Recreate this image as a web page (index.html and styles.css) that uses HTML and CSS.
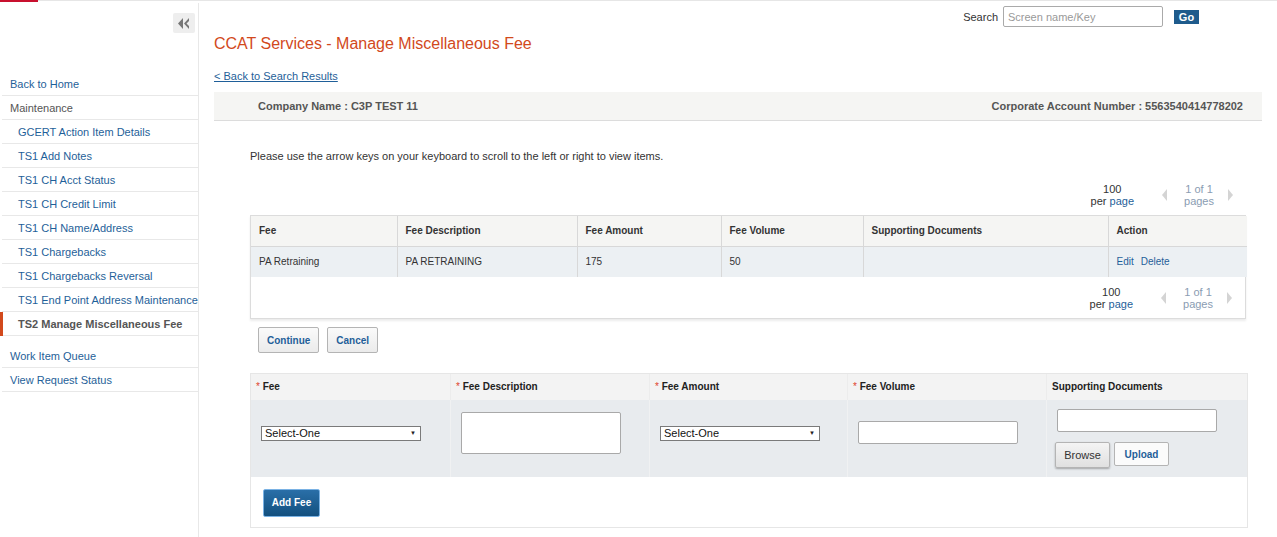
FILE: index.html
```html
<!DOCTYPE html>
<html>
<head>
<meta charset="utf-8">
<link rel="stylesheet" href="styles.css">
</head>
<body>
<div class="topbar"><span class="redmark"></span></div>
<div class="layout">
  <aside class="sidebar">
    <div class="collapse-row">
      <button class="collapse" type="button" aria-label="Collapse">
        <svg width="12" height="11" viewBox="0 0 12 11"><path d="M5 0 L0 5.5 L5 11 L5 0 Z M11 0 L6 5.5 L11 11 L11 8 L8.5 5.5 L11 3 Z" fill="#777"/></svg>
      </button>
    </div>
    <ul class="nav">
      <li class="nav-item"><a class="nav-link" href="#">Back to Home</a></li>
      <li class="nav-item nav-section">Maintenance</li>
      <li class="nav-item nav-sub"><a class="nav-link" href="#">GCERT Action Item Details</a></li>
      <li class="nav-item nav-sub"><a class="nav-link" href="#">TS1 Add Notes</a></li>
      <li class="nav-item nav-sub"><a class="nav-link" href="#">TS1 CH Acct Status</a></li>
      <li class="nav-item nav-sub"><a class="nav-link" href="#">TS1 CH Credit Limit</a></li>
      <li class="nav-item nav-sub"><a class="nav-link" href="#">TS1 CH Name/Address</a></li>
      <li class="nav-item nav-sub"><a class="nav-link" href="#">TS1 Chargebacks</a></li>
      <li class="nav-item nav-sub"><a class="nav-link" href="#">TS1 Chargebacks Reversal</a></li>
      <li class="nav-item nav-sub"><a class="nav-link" href="#">TS1 End Point Address Maintenance</a></li>
      <li class="nav-item nav-sub nav-active">TS2 Manage Miscellaneous Fee</li>
      <li class="nav-item nav-gap"><a class="nav-link" href="#">Work Item Queue</a></li>
      <li class="nav-item"><a class="nav-link" href="#">View Request Status</a></li>
    </ul>
  </aside>

  <main class="main">
    <div class="search-row">
      <label class="search-label">Search</label>
      <input class="search-input" type="text" placeholder="Screen name/Key">
      <button class="go-btn" type="button">Go</button>
    </div>
    <h1 class="page-title">CCAT Services - Manage Miscellaneous Fee</h1>
    <a class="back-link" href="#">&lt; Back to Search Results</a>

    <div class="company-bar">
      <span>Company Name : C3P TEST 11</span>
      <span>Corporate Account Number : 5563540414778202</span>
    </div>

    <div class="content">
      <p class="hint">Please use the arrow keys on your keyboard to scroll to the left or right to view items.</p>

      <div class="pager pager-top">
        <div class="perpage"><span class="num">100</span><span class="pp">per <a href="#">page</a></span></div>
        <span class="arrow arrow-left"></span>
        <div class="pages"><span>1 of 1</span><span>pages</span></div>
        <span class="arrow arrow-right"></span>
      </div>

      <div class="grid-box">
        <table class="grid">
          <colgroup>
            <col style="width:146px"><col style="width:180px"><col style="width:144px"><col style="width:142px"><col style="width:245px"><col style="width:139px">
          </colgroup>
          <thead>
            <tr><th>Fee</th><th>Fee Description</th><th>Fee Amount</th><th>Fee Volume</th><th>Supporting Documents</th><th>Action</th></tr>
          </thead>
          <tbody>
            <tr><td>PA Retraining</td><td>PA RETRAINING</td><td>175</td><td>50</td><td></td><td><a href="#">Edit</a><a class="gap-link" href="#">Delete</a></td></tr>
          </tbody>
        </table>
        <div class="pager pager-bottom">
          <div class="perpage"><span class="num">100</span><span class="pp">per <a href="#">page</a></span></div>
          <span class="arrow arrow-left"></span>
          <div class="pages"><span>1 of 1</span><span>pages</span></div>
          <span class="arrow arrow-right"></span>
        </div>
      </div>

      <div class="actions">
        <button class="btn" type="button">Continue</button>
        <button class="btn" type="button">Cancel</button>
      </div>

      <div class="form-box">
        <div class="form-grid">
          <div class="fh"><span class="req">*</span> Fee</div>
          <div class="fh"><span class="req">*</span> Fee Description</div>
          <div class="fh"><span class="req">*</span> Fee Amount</div>
          <div class="fh"><span class="req">*</span> Fee Volume</div>
          <div class="fh">Supporting Documents</div>

          <div class="fc"><div class="sel"><span>Select-One</span><span class="caret">&#9660;</span></div></div>
          <div class="fc"><textarea class="ta"></textarea></div>
          <div class="fc"><div class="sel"><span>Select-One</span><span class="caret">&#9660;</span></div></div>
          <div class="fc"><input class="txt" type="text"></div>
          <div class="fc fc-docs">
            <input class="txt" type="text">
            <div class="doc-btns">
              <button class="browse" type="button">Browse</button>
              <button class="btn upload" type="button">Upload</button>
            </div>
          </div>
        </div>
        <div class="form-foot">
          <button class="add-btn" type="button">Add Fee</button>
        </div>
      </div>
    </div>
  </main>
</div>
</body>
</html>
```

FILE: styles.css
```css
* { box-sizing: border-box; }
html, body { margin: 0; padding: 0; background: #fff; }
body {
  font-family: "Liberation Sans", Arial, sans-serif;
  font-size: 11px;
  color: #333;
  width: 1277px;
  height: 537px;
  overflow: hidden;
}
a { color: #1f5f99; text-decoration: none; }

.topbar {
  height: 3px;
  border-top: 1px solid #e6e6e6;
  display: flex;
  position: relative;
}
.redmark {
  position: absolute;
  left: 0; top: -1px;
  width: 38px; height: 2px;
  background: #c8102e;
}

.layout { display: flex; height: 534px; }

.sidebar {
  width: 199px;
  flex: 0 0 199px;
  border-right: 1px solid #e8e8e8;
  padding-top: 9px;
}
.collapse-row { display: flex; justify-content: flex-end; padding-right: 3px; height: 60px; padding-top: 1px; }
.collapse {
  width: 22px; height: 20px;
  border: none;
  border-radius: 2px;
  background: #eeeeee;
  display: flex; align-items: center; justify-content: center;
  padding: 0;
}
.nav { list-style: none; margin: 0; padding: 0 0 0 2px; }
.nav-item {
  height: 24px;
  padding-top: 2px;
  line-height: 21px;
  border-bottom: 1px solid #e8e8e8;
  padding-left: 8px;
  white-space: nowrap;
}
.nav-link { color: #1f5f99; }
.nav-section { color: #555; }
.nav-sub { padding-left: 16px; }
.nav-active {
  font-weight: bold;
  color: #555;
  position: relative;
}
.nav-active::before {
  content: "";
  position: absolute;
  left: -2px; top: 0;
  width: 3px; height: 24px;
  background: #d2491c;
}
.nav-gap { margin-top: 8px; }

.main { flex: 1; padding: 0 15px 0 15px; min-width: 0; }

.search-row {
  display: flex;
  justify-content: flex-end;
  align-items: center;
  height: 21px;
  margin-top: 3px;
  padding-right: 63px;
}
.search-label { color: #333; margin-right: 5px; }
.search-input {
  width: 160px; height: 21px;
  border: 1px solid #aaa;
  border-radius: 2px;
  font-family: inherit; font-size: 11px;
  padding: 0 4px;
}
.search-input::placeholder { color: #999; }
.go-btn {
  margin-left: 11px;
  width: 25px; height: 14px;
  padding: 0;
  border: none;
  background: #1e5b8c;
  color: #fff;
  font-family: inherit; font-weight: bold; font-size: 11px;
  line-height: 14px;
}

.page-title {
  margin: 7px 0 0 0;
  font-size: 16px;
  font-weight: normal;
  color: #d2491c;
  line-height: 20px;
}
.back-link {
  display: inline-block;
  margin-top: 16px;
  text-decoration: underline;
  color: #1f5f99;
  line-height: 13px;
}

.company-bar {
  margin-top: 9px;
  height: 29px;
  background: #f5f5f3;
  border-bottom: 1px solid #dcdcdc;
  display: flex;
  justify-content: space-between;
  align-items: center;
  padding: 0 19px 0 44px;
  font-weight: bold;
  color: #555;
}

.content { padding: 0 0 0 36px; width: 1035px; }

.hint { margin: 29px 0 0 0; line-height: 13px; color: #333; }

.pager {
  display: flex;
  align-items: center;
  justify-content: flex-end;
  line-height: 12px;
}
.pager-top { margin-top: 20px; width: 996px; padding-right: 13px; height: 24px; }
.pager-bottom { height: 41px; padding-right: 13px; }
.perpage { display: flex; flex-direction: column; align-items: center; color: #333; }
.pages { display: flex; flex-direction: column; align-items: center; color: #8a9cb2; margin: 0 14px 0 17px; }
.arrow { width: 0; height: 0; border-top: 6px solid transparent; border-bottom: 6px solid transparent; }
.arrow-left { border-right: 5px solid #d4d4d4; margin-left: 28px; }
.arrow-right { border-left: 5px solid #d4d4d4; }

.grid-box {
  margin-top: 8px;
  width: 996px;
  border: 1px solid #dcdcdc;
  box-shadow: 0 2px 2px rgba(0,0,0,0.08);
}
.grid { width: 994px; border-collapse: collapse; table-layout: fixed; font-size: 10px; }
.grid th, .grid td {
  height: 30px;
  padding: 0 8px;
  text-align: left;
  border-right: 1px solid #d8d8d8;
  vertical-align: middle;
}
.grid th:last-child, .grid td:last-child { border-right: none; }
.grid th {
  background: #f5f5f3;
  font-weight: bold;
  color: #333;
  border-bottom: 1px solid #d8d8d8;
}
.grid td { background: #ecf0f3; color: #333; height: 31px; }
.gap-link { margin-left: 7px; }

.actions { display: flex; gap: 8px; margin-top: 8px; padding-left: 8px; }
.btn {
  height: 26px;
  padding: 0 8px;
  border: 1px solid #b4b4b4;
  border-radius: 2px;
  background: linear-gradient(#fafafa, #ebebeb);
  color: #1f5f99;
  font-family: inherit; font-weight: bold; font-size: 10px;
}

.form-box {
  margin-top: 20px;
  width: 998px;
  border: 1px solid #e6e6e6;
}
.form-grid {
  display: grid;
  grid-template-columns: 200px 199px 198px 199px 200px;
}
.fh {
  height: 26px;
  background: #f3f3f3;
  font-weight: bold;
  font-size: 10px;
  color: #222;
  padding: 7px 0 0 5px;
  border-right: 1px solid #ececec;
}
.fh:nth-child(5) { border-right: none; }
.req { color: #e0442c; font-weight: normal; }
.fc {
  height: 77px;
  background: #e8ebee;
  border-right: 1px solid #f0f1f2;
  display: flex;
  align-items: center;
  padding-left: 10px;
  padding-bottom: 12px;
}
.fc:nth-child(10) { border-right: none; }
.sel {
  width: 160px; height: 15px;
  background: #fff;
  border: 1px solid #7a7a7a;
  display: flex; align-items: center; justify-content: space-between;
  padding: 0 4px 0 3px;
  font-size: 11px;
  color: #111;
  margin-top: 1px;
}
.caret { font-size: 6px; color: #222; }
.ta {
  width: 160px; height: 42px;
  border: 1px solid #a9a9a9;
  border-radius: 2px;
  resize: none;
  background: #fff;
}
.txt {
  width: 160px; height: 23px;
  border: 1px solid #a9a9a9;
  border-radius: 2px;
  background: #fff;
}
.fc-docs {
  flex-direction: column;
  align-items: flex-start;
  justify-content: flex-start;
  padding-top: 9px;
  padding-left: 10px;
  padding-bottom: 0;
}
.doc-btns { display: flex; gap: 4px; margin-top: 10px; margin-left: -2px; }
.browse {
  width: 55px; height: 26px;
  border: 1px solid #b4b4b4;
  border-radius: 2px;
  background: linear-gradient(#f4f4f4, #e0e0e0);
  box-shadow: 0 1px 2px rgba(0,0,0,0.3);
  color: #333;
  font-family: inherit; font-size: 11px;
  padding: 0;
}
.upload { width: 55px; height: 24px; padding: 0; background: #fbfbfb; }

.form-foot { height: 50px; display: flex; align-items: center; padding-left: 12px; }
.add-btn {
  width: 57px; height: 28px;
  border: 1px solid #7ab2e4;
  border-radius: 2px;
  background: linear-gradient(#2a6fa8, #13507f);
  color: #fff;
  font-family: inherit; font-weight: bold; font-size: 10px;
  padding: 0;
  margin-top: 1px;
}
```
